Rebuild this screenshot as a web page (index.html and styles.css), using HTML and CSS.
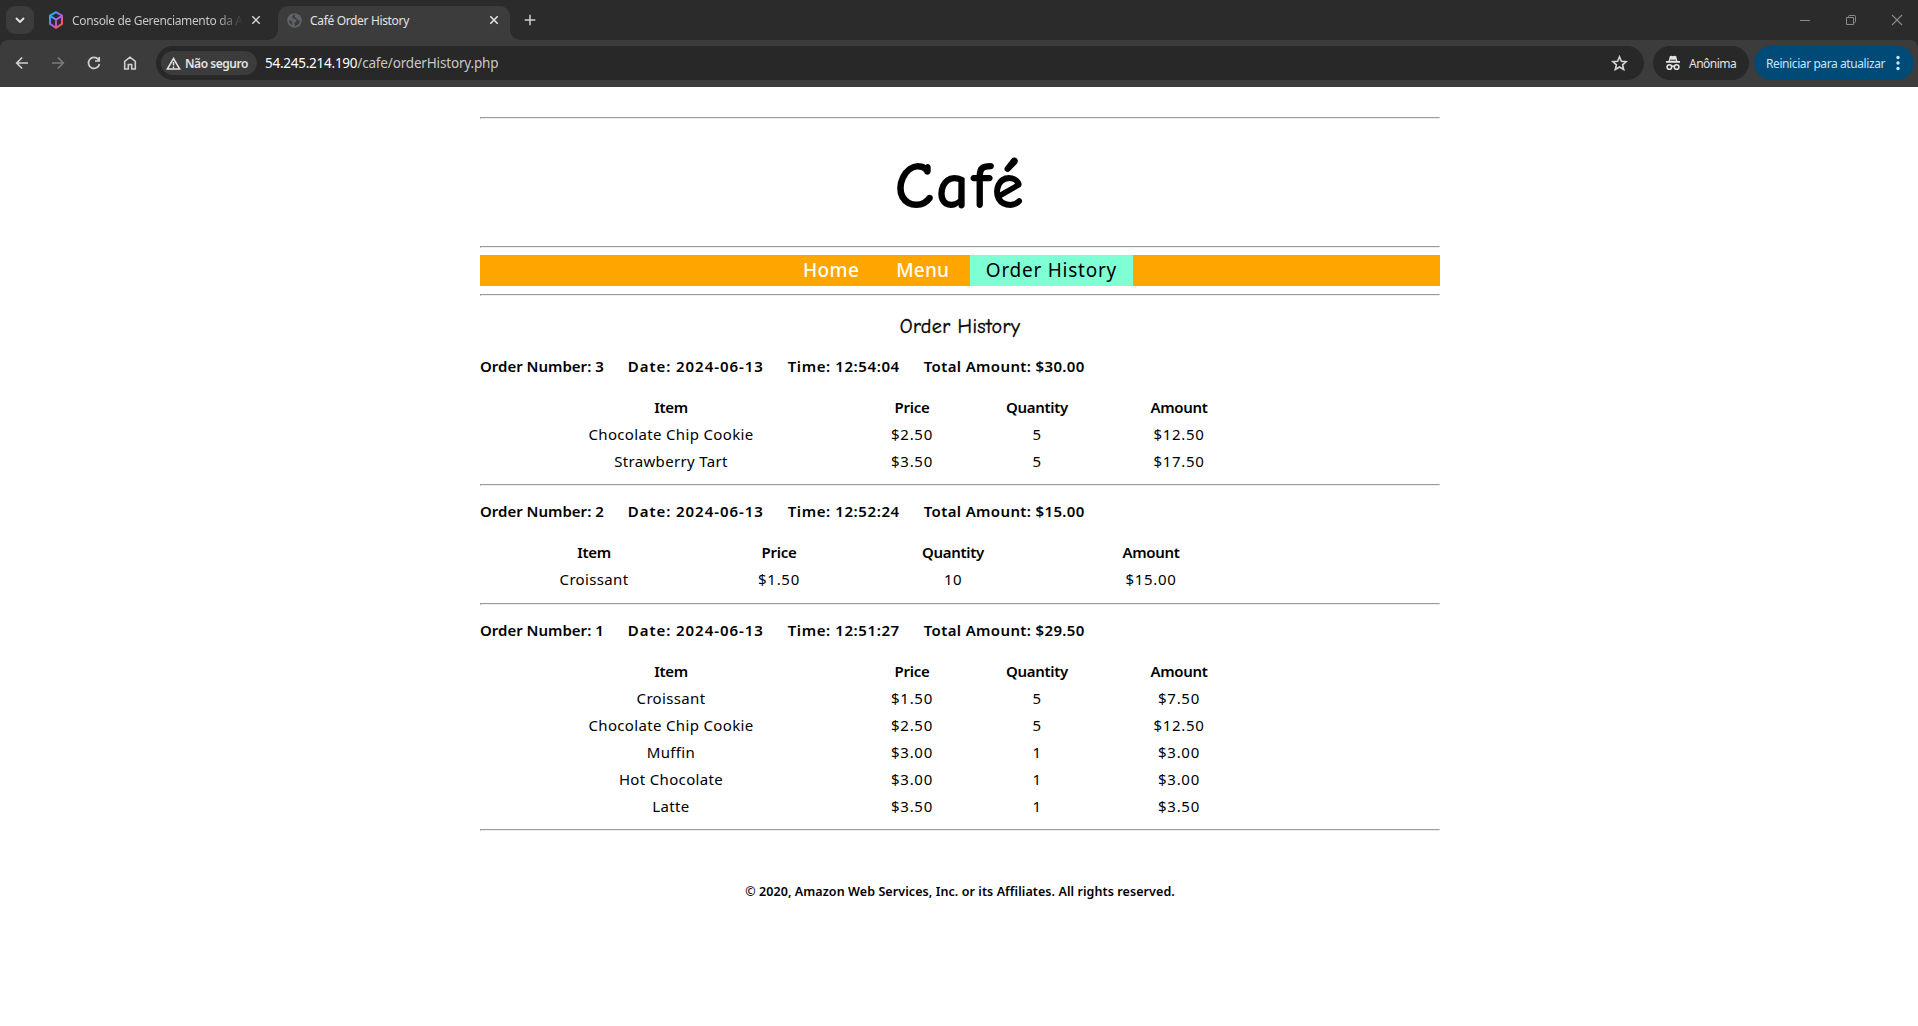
FILE: index.html
```html
<!DOCTYPE html>
<html lang="en">
<head>
<meta charset="utf-8">
<title>Café Order History</title>
<link rel="stylesheet" href="styles.css">
</head>
<body>
<div class="tabstrip">
  <div class="tab-search"><svg width="10" height="6" viewBox="0 0 10 6"><path d="M1 1l4 4 4-4" fill="none" stroke="#e3e3e3" stroke-width="1.9"/></svg></div>
  <div class="tab tab-idle">
    <svg class="favicon" width="16" height="18" viewBox="0 0 16 18"><defs><linearGradient id="g" x1="0" y1="0" x2="1" y2="1"><stop offset="0.1" stop-color="#14b8ee"/><stop offset="0.5" stop-color="#a35cf5"/><stop offset="0.9" stop-color="#ff5a4e"/></linearGradient></defs><path d="M8 1.2l6 3.5v8.2l-6 3.9-6-3.9V4.7zM2 4.9l6 3.8 6-3.8M8 8.7v8" fill="none" stroke="url(#g)" stroke-width="2" stroke-linejoin="round"/></svg>
    <span class="tab-title fade">Console de Gerenciamento da A</span>
    <svg class="x" width="10" height="10" viewBox="0 0 10 10"><path d="M1.3 1.3l7.4 7.4M8.7 1.3L1.3 8.7" stroke="#d5d5d5" stroke-width="1.5"/></svg>
  </div>
  <div class="tab tab-active">
    <svg class="favicon" width="15" height="15" viewBox="0 0 15 15"><circle cx="7.5" cy="7.5" r="7.3" fill="#5f6368"/><path d="M8.2 1.7C5.800 2 5 3 5.200 4.400 5.400 5.800 9.300 5.600 9.500 7.400 9.700 9 7.200 8.600 7.300 10.300c0 1 .6 1.500.4 2.700 2.700-.2 5-2.300 5.300-5C11.500 7.600 11 6.500 9.300 5.200 7.600 4.200 7.200 3.500 8.200 1.700zM1.900 7.600c.8-.2 2.600.2 3.200 1.200.5.900 0 1.900.1 3.400C3.400 11.400 2 9.700 1.900 7.600z" fill="#3c3c3c"/></svg>
    <span class="tab-title">Café Order History</span>
    <svg class="x" width="10" height="10" viewBox="0 0 10 10"><path d="M1.300 1.300l7.400 7.400M8.700 1.300L1.300 8.700" stroke="#e3e3e3" stroke-width="1.600"/></svg>
  </div>
  <svg class="plus" width="12" height="12" viewBox="0 0 12 12"><path d="M6 .7v10.600M.7 6h10.600" stroke="#d0d0d0" stroke-width="1.500"/></svg>
  <div class="window-buttons">
    <svg width="12" height="12" viewBox="0 0 12 12"><path d="M1 6.500h10" stroke="#8a8a8a"/></svg>
    <svg width="12" height="12" viewBox="0 0 12 12"><path d="M1.500 3.500h7v7h-7zM3.500 3V2.500q0-1 1-1h5q1 0 1 1v5q0 1-1 1H9" fill="none" stroke="#8a8a8a"/></svg>
    <svg width="12" height="12" viewBox="0 0 12 12"><path d="M1 1l10 10M11 1L1 11" stroke="#8a8a8a" stroke-width="1.100"/></svg>
  </div>
</div>
<div class="toolbar-edge">
<div class="toolbar">
  <div class="tools">
    <svg width="14" height="14" viewBox="0 0 14 14"><path d="M13 7H2M7.200 1.500L1.700 7l5.500 5.500" fill="none" stroke="#d0d0d0" stroke-width="1.700"/></svg>
    <svg width="14" height="14" viewBox="0 0 14 14"><path d="M1 7h11M6.800 1.500L12.300 7l-5.500 5.500" fill="none" stroke="#7b7b7b" stroke-width="1.700"/></svg>
    <svg width="14" height="14" viewBox="0 0 14 14"><path d="M12.400 8A5.500 5.500 0 1 1 11.300 3.500L12.300 4.700M12.200 1v4H8" fill="none" stroke="#d0d0d0" stroke-width="1.700"/></svg>
    <svg width="14" height="14" viewBox="0 0 14 14"><path d="M1.700 13V5.300L7 1.200l5.300 4.100V13H8.700V8.500H5.300V13z" fill="none" stroke="#d0d0d0" stroke-width="1.600"/></svg>
  </div>
  <div class="omnibox">
    <div class="chip"><svg width="15" height="13" viewBox="0 0 15 13"><path d="M7.500 1.500L13.700 12H1.300zM7.500 5v3.500M7.500 9.500V11" fill="none" stroke="#e3e3e3" stroke-width="1.500"/></svg><span>Não seguro</span></div>
    <span class="url"><b>54.245.214.190</b>/cafe/orderHistory.php</span>
    <svg class="star" width="17" height="16" viewBox="0 0 17 16"><path d="M8.500 1.800l1.900 4.400 4.800.4-3.600 3.200 1.100 4.700-4.200-2.500-4.200 2.500 1.100-4.700L1.800 6.600l4.800-.4z" fill="none" stroke="#d5d5d5" stroke-width="1.600"/></svg>
  </div>
  <div class="incognito"><svg width="16" height="16" viewBox="0 0 16 16"><path d="M3.600 6l1.200-4.800 1.700-.5L8 1.300l1.500-.6 1.700.5L12.400 6H15v1.700H1V6z" fill="#e3e3e3"/><path d="M5 5.200h6" stroke="#282828" stroke-width="1"/><circle cx="4.400" cy="12" r="2.300" fill="none" stroke="#e3e3e3" stroke-width="1.600"/><circle cx="11.600" cy="12" r="2.300" fill="none" stroke="#e3e3e3" stroke-width="1.600"/><path d="M6.500 11.500q1.500-1 3 0" fill="none" stroke="#e3e3e3" stroke-width="1.300"/></svg><span>Anônima</span></div>
  <div class="update"><span>Reiniciar para atualizar</span><svg width="4" height="16" viewBox="0 0 4 16"><g fill="#c2e7ff"><circle cx="2" cy="2.500" r="1.700"/><circle cx="2" cy="8" r="1.700"/><circle cx="2" cy="13.500" r="1.700"/></g></svg></div>
</div>
</div>
<main class="page">
  <hr>
  <h1>Café</h1>
  <hr>
  <nav><a>Home</a><a>Menu</a><a class="current">Order History</a></nav>
  <hr>
  <h2>Order History</h2>

  <section>
    <p class="summary"><span>Order Number: 3</span><span>Date: 2024-06-13</span><span>Time: 12:54:04</span><span>Total Amount: $30.00</span></p>
    <div class="grid">
      <b>Item</b><b>Price</b><b>Quantity</b><b>Amount</b>
      <span>Chocolate Chip Cookie</span><span>$2.50</span><span>5</span><span>$12.50</span>
      <span>Strawberry Tart</span><span>$3.50</span><span>5</span><span>$17.50</span>
    </div>
    <hr>
  </section>
  <section>
    <p class="summary"><span>Order Number: 2</span><span>Date: 2024-06-13</span><span>Time: 12:52:24</span><span>Total Amount: $15.00</span></p>
    <div class="grid grid-short">
      <b>Item</b><b>Price</b><b>Quantity</b><b>Amount</b>
      <span>Croissant</span><span>$1.50</span><span>10</span><span>$15.00</span>
    </div>
    <hr>
  </section>
  <section>
    <p class="summary"><span>Order Number: 1</span><span>Date: 2024-06-13</span><span>Time: 12:51:27</span><span>Total Amount: $29.50</span></p>
    <div class="grid">
      <b>Item</b><b>Price</b><b>Quantity</b><b>Amount</b>
      <span>Croissant</span><span>$1.50</span><span>5</span><span>$7.50</span>
      <span>Chocolate Chip Cookie</span><span>$2.50</span><span>5</span><span>$12.50</span>
      <span>Muffin</span><span>$3.00</span><span>1</span><span>$3.00</span>
      <span>Hot Chocolate</span><span>$3.00</span><span>1</span><span>$3.00</span>
      <span>Latte</span><span>$3.50</span><span>1</span><span>$3.50</span>
    </div>
    <hr>
  </section>
  <footer>© 2020, Amazon Web Services, Inc. or its Affiliates. All rights reserved.</footer>
</main>
</body>
</html>
```
FILE: styles.css
```css
* { box-sizing: border-box; }
body { margin: 0; background: #fff; color: #000; font-family: "Noto Sans", sans-serif; }
svg { display: block; flex: none; }
.tabstrip { height: 40px; background: #2b2b2b; display: flex; align-items: center; padding-left: 6px; font-size: 12px; letter-spacing: -0.34px; }
.tab-search { width: 28px; height: 28px; border-radius: 9px; background: #3c3c3c; display: flex; align-items: center; justify-content: center; }
.tab { display: flex; align-items: center; white-space: nowrap; }
.tab-idle { width: 244px; padding-left: 14px; color: #c7c7c7; }
.tab-title { flex: 1; margin-left: 8px; }
.tab-idle .x { margin: 0 17px 0 8px; }
.fade { -webkit-mask-image: linear-gradient(to right, #000 84%, transparent 100%); mask-image: linear-gradient(to right, #000 84%, transparent 100%); }
.tab-active { position: relative; align-self: flex-end; width: 232px; height: 34px; background: #3c3c3c; border-radius: 10px 10px 0 0; padding: 0 11px 6px 9px; color: #e3e3e3; }
.tab-active::before, .tab-active::after { content: ""; position: absolute; bottom: 0; width: 10px; height: 10px; }
.tab-active::before { left: -10px; background: radial-gradient(circle at 0 0, transparent 9.5px, #3c3c3c 10px); }
.tab-active::after { right: -10px; background: radial-gradient(circle at 100% 0, transparent 9.5px, #3c3c3c 10px); }
.plus { margin-left: 14px; }
.window-buttons { margin-left: auto; padding-right: 15px; display: flex; gap: 34px; }
.toolbar-edge { background: #2b2b2b; }
.toolbar { height: 47px; background: #3c3c3c; border-radius: 8px 8px 0 0; display: flex; align-items: center; padding: 0 4px 1px 15px; color: #e3e3e3; font-size: 12px; white-space: nowrap; }
.tools { display: flex; gap: 22px; width: 141px; }
.omnibox { width: 1488px; height: 34px; border-radius: 17px; background: #282828; display: flex; align-items: center; padding: 0 16px 0 5px; }
.chip { width: 96px; height: 24px; border-radius: 12px; background: #3c3c3c; display: flex; align-items: center; gap: 4px; padding-left: 5px; font-weight: 600; letter-spacing: -0.45px; }
.url { margin-left: 8px; font-size: 13.5px; letter-spacing: -0.17px; color: #c7c7c7; }
.url b { font-weight: 400; color: #fff; letter-spacing: -0.25px; }
.star { margin-left: auto; }
.incognito { margin-left: 9px; width: 96px; height: 34px; border-radius: 17px; background: #282828; display: flex; align-items: center; gap: 8px; padding-left: 12px; letter-spacing: -0.5px; }
.update { margin-left: 5px; width: 160px; height: 34px; border-radius: 17px; background: #004a77; color: #c2e7ff; display: flex; align-items: center; justify-content: space-between; padding: 0 14px 0 12px; letter-spacing: -0.41px; }

.page { width: 960px; margin: 30px 0 0 480px; }
hr { margin: 0; height: 2px; border: 1px solid #9a9a9a; border-right-color: #eee; border-bottom-color: #eee; }
h1 { margin: 0; height: 127px; line-height: 136px; text-align: center; font-size: 66px; letter-spacing: 1.5px; font-weight: 700; font-family: "Comic Sans MS", "Comic Neue", "Noto Sans", cursive; }
nav { margin: 7px 0 8px; height: 31px; background: #ffa500; color: #fff; display: flex; padding-left: 323px; line-height: 30px; font-size: 19px; font-weight: 500; letter-spacing: 0.4px; }
nav a:nth-child(2) { margin-left: 37px; letter-spacing: 0.1px; }
.current { margin-left: 21px; width: 163px; text-align: center; background: #7fffd4; color: #000; font-weight: 400; letter-spacing: 0.75px; }
h2 { margin: 0; padding-top: 17px; height: 54px; line-height: 28px; text-align: center; font-size: 20px; letter-spacing: 0.4px; font-weight: 400; -webkit-text-stroke: 0.35px #000; font-family: "Comic Sans MS", "Comic Neue", "Noto Sans", cursive; }
.summary { margin: 0; height: 44px; padding-top: 2px; line-height: 28px; font-size: 15px; font-weight: 600; display: flex; gap: 24px; white-space: nowrap; }
.summary span:nth-child(2) { letter-spacing: 0.94px; }
.summary span:nth-child(3) { letter-spacing: 0.59px; }
.summary span:nth-child(4) { letter-spacing: 0.36px; }
.grid { display: grid; grid-template-columns: 378px 104px 146px 138px; padding-left: 2px; grid-auto-rows: 27px; line-height: 27px; text-align: center; font-size: 15px; letter-spacing: 0.34px; margin-bottom: 9px; }
.grid b { font-weight: 600; letter-spacing: -0.3px; }
.grid span:nth-child(4n), .grid span:nth-child(4n + 2) { letter-spacing: 0.7px; }
.grid-short { grid-template-columns: 224px 146px 202px 194px; margin-bottom: 10px; }
section + section { padding-top: 9px; }
footer { margin-top: 49px; line-height: 24px; text-align: center; font-size: 12.5px; letter-spacing: 0.08px; font-weight: 600; }
```
